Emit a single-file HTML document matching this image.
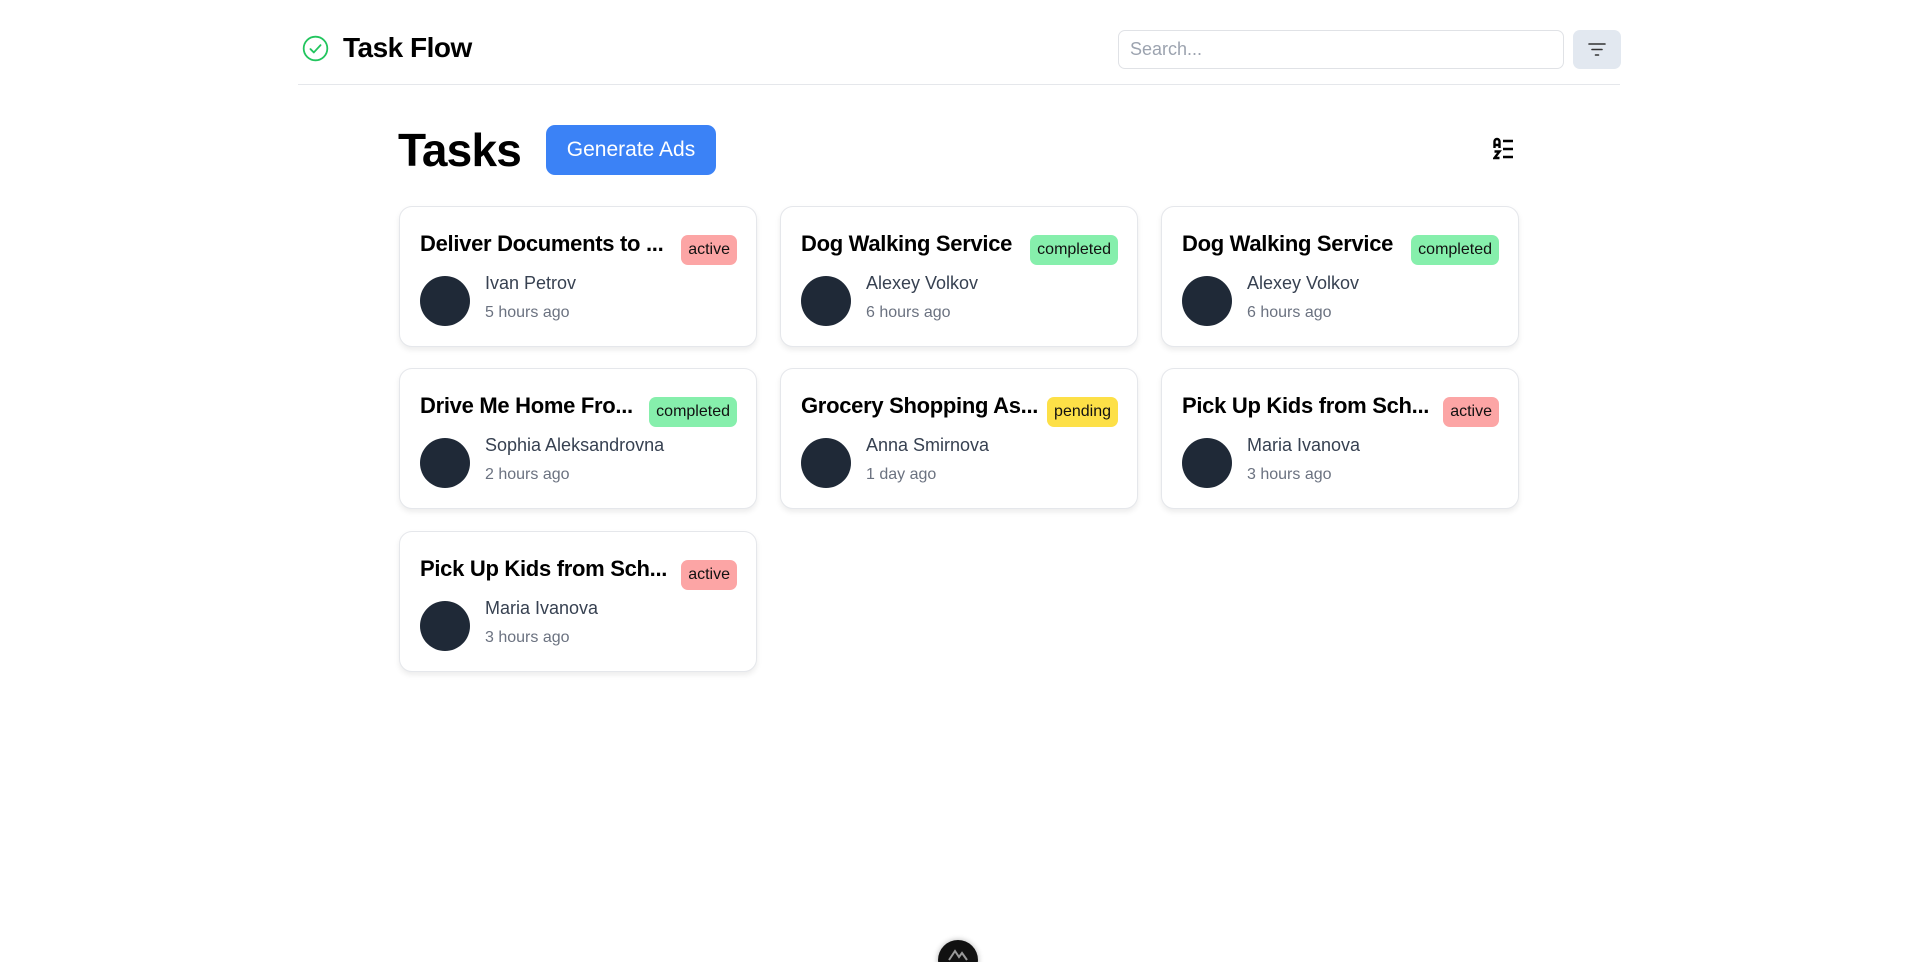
<!DOCTYPE html>
<html><head><meta charset="utf-8"><style>
*{box-sizing:border-box;margin:0;padding:0}
html,body{width:1911px;height:962px;overflow:hidden}
body{background:#fff;font-family:"Liberation Sans",sans-serif;color:#000;position:relative}
.hdr{position:absolute;left:298px;top:84px;width:1322px;height:1px;background:#e5e7eb}
.logo{position:absolute;left:302px;top:35px}
.brand{position:absolute;left:343px;top:32px;font-size:28px;font-weight:bold;letter-spacing:-0.5px}
.search{position:absolute;left:1118px;top:30px;width:446px;height:39px;border:1px solid #e0e2e6;border-radius:7px;padding:0 11px;line-height:37px;font-size:18px;color:#9ca3af}
.fbtn{position:absolute;left:1573px;top:30px;width:48px;height:39px;background:#e2e8f0;border-radius:7px}
.tasks{position:absolute;left:398px;top:123px;font-size:46px;font-weight:bold;letter-spacing:-0.8px}
.gen{position:absolute;left:546px;top:125px;width:170px;height:50px;background:#3b82f6;border-radius:9px;color:#fff;font-size:21px;line-height:50px;text-align:center;font-weight:500}
.sort{position:absolute;left:1493px;top:137px}
.card{position:absolute;width:358px;height:141px;border:1px solid #e5e7eb;border-radius:13px;box-shadow:0 3px 6px rgba(0,0,0,.08);background:#fff}
.t{position:absolute;left:20px;top:24px;font-size:22px;font-weight:bold;white-space:nowrap;letter-spacing:-0.3px}
.b{position:absolute;top:28px;right:19px;height:30px;padding:0 7px;border-radius:7px;font-size:16px;line-height:30px;color:#111}
.a{background:#fca5a5}.c{background:#86efac}.p{background:#fde047}
.av{position:absolute;left:20px;top:69px;width:50px;height:50px;border-radius:50%;background:#1f2937}
.n{position:absolute;left:85px;top:66px;font-size:18px;color:#374151}
.tm{position:absolute;left:85px;top:97px;font-size:16px;color:#6b7280}
.bot{position:absolute;left:938px;top:940px;width:40px;height:40px;border-radius:50%;background:#111;box-shadow:0 0 6px rgba(0,0,0,.3)}
</style></head><body>
<svg class="logo" width="27" height="27" viewBox="0 0 24 24" fill="none" stroke="#22c55e" stroke-width="1.6" stroke-linecap="round" stroke-linejoin="round"><circle cx="12" cy="12" r="10.5"/><path d="M7.5 12.5l3 3 6-6.5"/></svg>
<div class="brand">Task Flow</div>
<div class="search">Search...</div>
<div class="fbtn"><svg width="48" height="39" viewBox="0 0 48 39" stroke="#333" stroke-width="1.6" stroke-linecap="round"><path d="M16 14h16M19 19.5h10M22.5 25h3"/></svg></div>
<div class="hdr"></div>
<div class="tasks">Tasks</div>
<div class="gen">Generate Ads</div>
<svg class="sort" width="26" height="26" viewBox="0 0 26 26" fill="none" stroke="#000" stroke-width="2.4"><path d="M1.5 11V4.5a2.5 2.5 0 0 1 5 0V11M1.5 8h5M1.5 14.5h5l-5 6.5h5M10 4h10M10 12h10M10 20h10"/></svg>

<div class="card" style="left:399px;top:206px"><div class="t">Deliver Documents to ...</div><div class="b a">active</div><div class="av"></div><div class="n">Ivan Petrov</div><div class="tm">5 hours ago</div></div>
<div class="card" style="left:780px;top:206px"><div class="t">Dog Walking Service</div><div class="b c">completed</div><div class="av"></div><div class="n">Alexey Volkov</div><div class="tm">6 hours ago</div></div>
<div class="card" style="left:1161px;top:206px"><div class="t">Dog Walking Service</div><div class="b c">completed</div><div class="av"></div><div class="n">Alexey Volkov</div><div class="tm">6 hours ago</div></div>
<div class="card" style="left:399px;top:368px"><div class="t">Drive Me Home Fro...</div><div class="b c">completed</div><div class="av"></div><div class="n">Sophia Aleksandrovna</div><div class="tm">2 hours ago</div></div>
<div class="card" style="left:780px;top:368px"><div class="t">Grocery Shopping As...</div><div class="b p">pending</div><div class="av"></div><div class="n">Anna Smirnova</div><div class="tm">1 day ago</div></div>
<div class="card" style="left:1161px;top:368px"><div class="t">Pick Up Kids from Sch...</div><div class="b a">active</div><div class="av"></div><div class="n">Maria Ivanova</div><div class="tm">3 hours ago</div></div>
<div class="card" style="left:399px;top:531px"><div class="t">Pick Up Kids from Sch...</div><div class="b a">active</div><div class="av"></div><div class="n">Maria Ivanova</div><div class="tm">3 hours ago</div></div>

<div class="bot"><svg width="40" height="40" viewBox="0 0 40 40" fill="none" stroke="#999" stroke-width="2"><path d="M11 20l6-9 4 6 3-4 5 7"/></svg></div>
</body></html>
